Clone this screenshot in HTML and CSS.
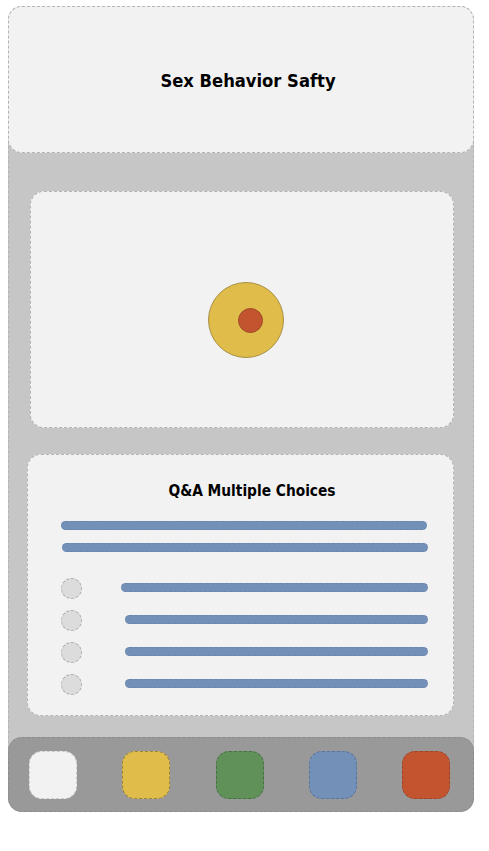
FILE: index.html
```html
<!DOCTYPE html>
<html lang="en">
  <head>
    <meta charset="UTF-8" />
    <meta name="viewport" content="width=device-width, initial-scale=1.0" />
    <title>Sex Behavior Safty</title>
    <link rel="stylesheet" href="styles.css">
  </head>
  <body>
    <div class="phone">
      <header class="header">
        <h1>Sex Behavior Safty</h1>
      </header>

      <section class="card target-card">
        <div class="target">
          <div class="dot"></div>
        </div>
      </section>

      <section class="card quiz-card">
        <h2>Q&amp;A Multiple Choices</h2>
        <div class="question">
          <span class="bar"></span>
          <span class="bar second"></span>
        </div>
        <ul class="options">
          <li><span class="radio"></span><span class="bar first"></span></li>
          <li><span class="radio"></span><span class="bar"></span></li>
          <li><span class="radio"></span><span class="bar"></span></li>
          <li><span class="radio"></span><span class="bar"></span></li>
        </ul>
      </section>

      <nav class="dock">
        <span class="app white"></span>
        <span class="app yellow"></span>
        <span class="app green"></span>
        <span class="app blue"></span>
        <span class="app red"></span>
      </nav>
    </div>
  </body>
</html>
```

FILE: styles.css
```css
* {
  margin: 0;
  padding: 0;
  box-sizing: border-box;
}
body {
  background: #fff;
  font-family: "DejaVu Sans Condensed", "Roboto Condensed", Roboto, sans-serif;
  color: #000;
}
.phone {
  width: 466px;
  margin: 6px 0 0 8px;
  background: #c6c6c6;
  border: 1px dashed #b4b4b4;
  border-radius: 14px;
  display: flex;
  flex-direction: column;
}
.header {
  height: 147px;
  margin: -1px -1px 0;
  background: #f2f2f2;
  border: 1px dashed #b4b4b4;
  border-radius: 14px;
  display: flex;
  justify-content: center;
  align-items: center;
}
.header h1 {
  font-size: 18.2px;
  font-weight: bold;
  margin: 2px 0 0 14px;
}
.card {
  background: #f2f2f2;
  border: 1px dashed #b4b4b4;
  border-radius: 14px;
}
.target-card {
  height: 237px;
  margin: 38px 19px 0 21px;
  display: flex;
  justify-content: center;
  align-items: center;
}
.target {
  width: 76px;
  height: 76px;
  margin: 21px 0 0 7px;
  border-radius: 50%;
  background: #e0bc4a;
  border: 1px solid #a89046;
  display: flex;
  justify-content: center;
  align-items: center;
}
.dot {
  width: 25px;
  height: 25px;
  margin-left: 10px;
  border-radius: 50%;
  background: #c2552f;
  border: 1px solid #a14a2c;
}
.quiz-card {
  height: 262px;
  margin: 26px 19px 0 18px;
  padding: 26px 26px 0 33px;
}
.quiz-card h2 {
  font-size: 15.3px;
  font-weight: bold;
  text-align: center;
  margin-left: 16px;
  line-height: 20px;
}
.bar {
  display: block;
  height: 9px;
  background: #7390b8;
  border-radius: 5px;
  border: 1px dashed #6a86ad;
}
.question {
  margin-top: 20px;
  display: flex;
  flex-direction: column;
  gap: 13px;
}
.question .second {
  margin-left: 1px;
  margin-right: -1px;
}
.options {
  list-style: none;
  margin-top: 26px;
  display: flex;
  flex-direction: column;
  gap: 11px;
}
.options li {
  display: flex;
  align-items: center;
  height: 21px;
}
.radio {
  width: 21px;
  height: 21px;
  border-radius: 50%;
  background: #dcdcdc;
  border: 1px dashed #a8a8a8;
  flex-shrink: 0;
}
.options .bar {
  flex: 1;
  margin-left: 43px;
  margin-right: -1px;
  position: relative;
  top: -1px;
}
.options .bar.first {
  margin-left: 39px;
}
.dock {
  height: 75px;
  margin: 21px -1px -1px;
  background: #999;
  border: 1px dashed #8c8c8c;
  border-radius: 14px;
  display: flex;
  justify-content: space-between;
  align-items: center;
  padding: 1px 23px 0 20px;
}
.app {
  width: 48px;
  height: 48px;
  border-radius: 13px;
  border: 1px dashed #777;
}
.white {
  background: #f2f2f2;
  border-color: #ccc;
}
.yellow {
  background: #e0bc4a;
  border-color: #9a8240;
}
.green {
  background: #5f9159;
  border-color: #4a6e46;
}
.blue {
  background: #7390b8;
  border-color: #5b7396;
}
.red {
  background: #c2552f;
  border-color: #99452a;
}
```
